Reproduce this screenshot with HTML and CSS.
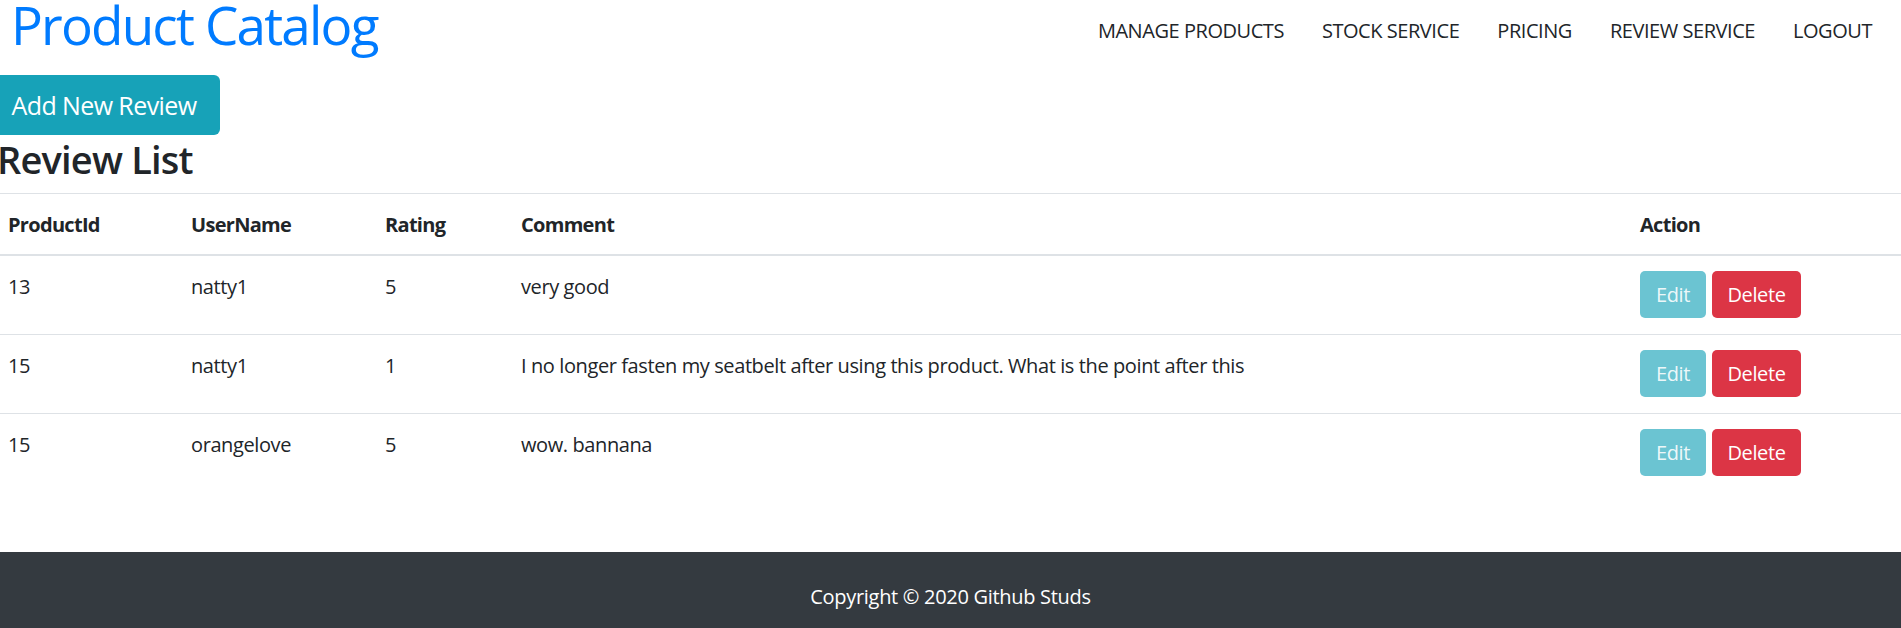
FILE: index.html
```html
<!DOCTYPE html>
<html lang="en">
<head>
<meta charset="utf-8">
<title>Product Catalog</title>
<link rel="stylesheet" href="styles.css">
</head>
<body>
<header class="topbar">
  <h1 class="brand">Product Catalog</h1>
  <nav class="nav">
    <a class="nav-link" href="#">Manage Products</a>
    <a class="nav-link" href="#">Stock Service</a>
    <a class="nav-link" href="#">Pricing</a>
    <a class="nav-link" href="#">Review Service</a>
    <a class="nav-link" href="#">Logout</a>
  </nav>
</header>
<main class="content">
  <button class="btn btn-add">Add New Review</button>
  <h2 class="section-title">Review List</h2>
  <table class="table">
    <colgroup>
      <col class="c-id"><col class="c-user"><col class="c-rating"><col class="c-comment"><col class="c-action">
    </colgroup>
    <thead>
      <tr><th>ProductId</th><th>UserName</th><th>Rating</th><th>Comment</th><th>Action</th></tr>
    </thead>
    <tbody>
      <tr>
        <td>13</td><td>natty1</td><td>5</td><td>very good</td>
        <td><div class="actions"><button class="btn btn-edit">Edit</button><button class="btn btn-delete">Delete</button></div></td>
      </tr>
      <tr>
        <td>15</td><td>natty1</td><td>1</td><td>I no longer fasten my seatbelt after using this product. What is the point after this</td>
        <td><div class="actions"><button class="btn btn-edit">Edit</button><button class="btn btn-delete">Delete</button></div></td>
      </tr>
      <tr>
        <td>15</td><td>orangelove</td><td>5</td><td>wow. bannana</td>
        <td><div class="actions"><button class="btn btn-edit">Edit</button><button class="btn btn-delete">Delete</button></div></td>
      </tr>
    </tbody>
  </table>
</main>
<footer class="footer">Copyright © 2020 Github Studs</footer>
</body>
</html>
```
FILE: styles.css
```css
* { box-sizing: border-box; }
html, body { margin: 0; padding: 0; }
body {
  font-family: "Open Sans", "Noto Sans", sans-serif;
  font-size: 20px;
  line-height: 30px;
  letter-spacing: -0.4px;
  color: #212529;
  background: #fff;
  overflow-x: hidden;
}
.topbar {
  display: flex;
  justify-content: space-between;
  align-items: flex-start;
  height: 75px;
  padding: 0 10px 0 11px;
}
.brand {
  margin: 0;
  font-size: 53px;
  line-height: 49px;
  font-weight: 400;
  color: #007bff;
  letter-spacing: -1.8px;
}
.nav {
  display: flex;
  margin-top: 16px;
}
.nav-link {
  padding: 0 19px;
  font-size: 20px;
  line-height: 30px;
  letter-spacing: -0.45px;
  color: #212529;
  text-decoration: none;
  text-transform: uppercase;
}
.content {
  padding-bottom: 40px;
}
.btn {
  display: inline-flex;
  align-items: center;
  justify-content: center;
  border: 0;
  color: #fff;
  font-family: inherit;
  letter-spacing: -0.4px;
  cursor: pointer;
}
.btn-add {
  margin-left: -12px;
  width: 232px;
  height: 60px;
  padding: 0;
  font-size: 25px;
  letter-spacing: -0.6px;
  background: #17a2b8;
  border-radius: 6px;
}
.section-title {
  margin: 0 0 10px -3px;
  font-size: 38px;
  line-height: 48px;
  font-weight: 600;
  letter-spacing: -0.8px;
}
.table {
  width: calc(100% + 7px);
  margin-left: -7px;
  table-layout: fixed;
  border-collapse: separate;
  border-spacing: 0;
  margin-bottom: 20px;
}
.c-id { width: 183px; }
.c-user { width: 194px; }
.c-rating { width: 136px; }
.c-comment { width: 1119px; }
.table th {
  text-align: left;
  font-weight: 700;
  letter-spacing: -0.7px;
  padding: 16px 15px 14px;
  border-top: 1px solid #dee2e6;
  border-bottom: 2px solid #dee2e6;
  vertical-align: bottom;
}
.table td {
  padding: 16px 15px 15px;
  border-top: 1px solid #dee2e6;
  vertical-align: top;
  white-space: nowrap;
}
.table td:last-child { padding-top: 15px; padding-bottom: 16px; }
.table tbody tr:first-child td { border-top: 0; }
.actions {
  display: flex;
  gap: 6px;
}
.btn-edit, .btn-delete {
  height: 47px;
  font-size: 20px;
  border-radius: 5px;
}
.btn-edit {
  width: 66px;
  background: #6bc4d2;
  color: rgba(255, 255, 255, 0.9);
}
.btn-delete {
  width: 89px;
  background: #dc3545;
}
.footer {
  background: #343a40;
  color: #fff;
  text-align: center;
  padding: 30px 0;
  font-size: 20px;
  line-height: 30px;
  letter-spacing: -0.3px;
}
```
